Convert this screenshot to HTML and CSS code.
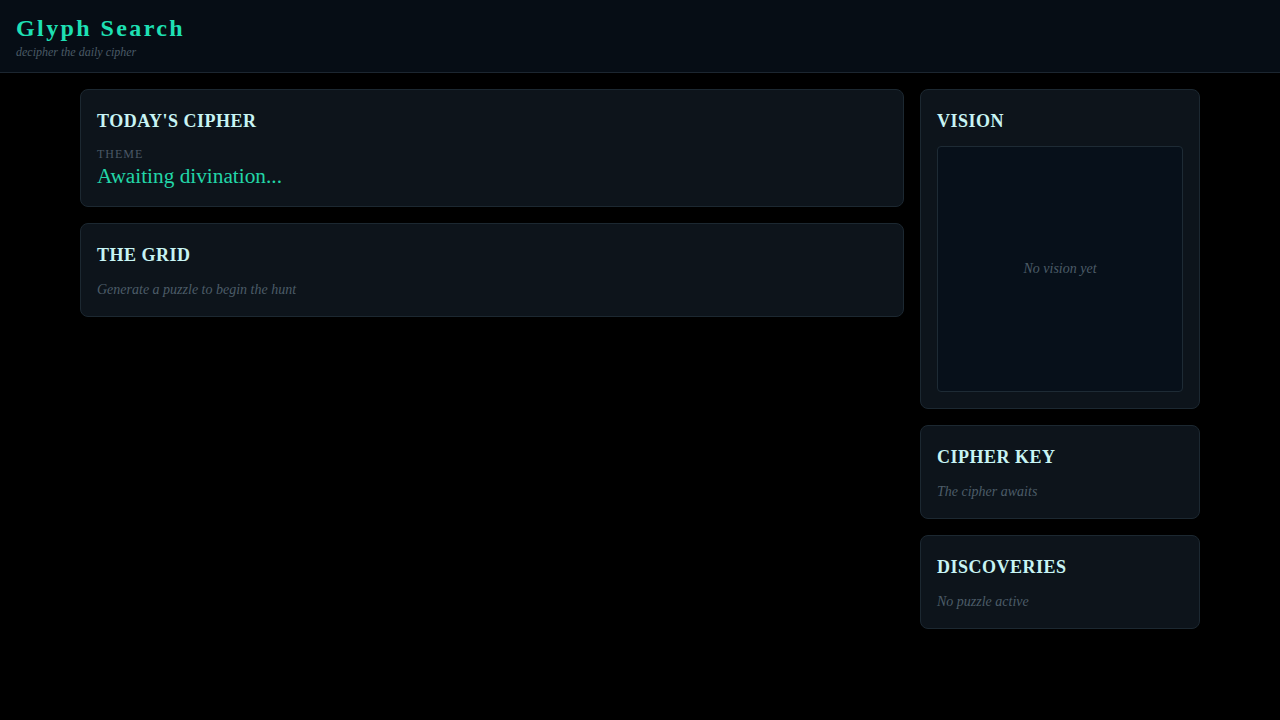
FILE: index.html
```html
<!DOCTYPE html>
<html lang="en">
<head>
<meta charset="utf-8">
<title>Glyph Search</title>
<link rel="stylesheet" href="styles.css">
</head>
<body>
<header class="topbar">
  <h1 class="brand">Glyph Search</h1>
  <p class="tagline">decipher the daily cipher</p>
</header>
<main class="layout">
  <section class="col-main">
    <div class="card">
      <h2 class="card-title">TODAY'S CIPHER</h2>
      <div class="label">THEME</div>
      <div class="theme">Awaiting divination...</div>
    </div>
    <div class="card">
      <h2 class="card-title">THE GRID</h2>
      <p class="empty">Generate a puzzle to begin the hunt</p>
    </div>
  </section>
  <aside class="col-side">
    <div class="card">
      <h2 class="card-title">VISION</h2>
      <div class="vision"><span class="empty">No vision yet</span></div>
    </div>
    <div class="card">
      <h2 class="card-title">CIPHER KEY</h2>
      <p class="empty">The cipher awaits</p>
    </div>
    <div class="card">
      <h2 class="card-title">DISCOVERIES</h2>
      <p class="empty">No puzzle active</p>
    </div>
  </aside>
</main>
</body>
</html>
```
FILE: styles.css
```css
* { box-sizing: border-box; }
html, body { margin: 0; padding: 0; }
body {
  background: #000000;
  font-family: "Liberation Serif", serif;
  color: #c8f0f0;
  min-height: 720px;
}
.topbar {
  background: #060d15;
  border-bottom: 1px solid #1c2630;
  height: 73px;
  padding: 14px 16px 0;
}
.brand {
  margin: 0;
  font-size: 24px;
  font-weight: bold;
  letter-spacing: 2.4px;
  color: #1ee0b4;
  line-height: 28px;
}
.tagline {
  margin: 2px 0 0;
  font-size: 12px;
  font-style: italic;
  color: #4a5a66;
  line-height: 16px;
}
.layout {
  width: 1120px;
  margin: 0 auto;
  padding-top: 16px;
  display: flex;
  gap: 16px;
  align-items: flex-start;
}
.col-main {
  flex: 1;
  display: flex;
  flex-direction: column;
  gap: 16px;
}
.col-side {
  width: 280px;
  display: flex;
  flex-direction: column;
  gap: 16px;
}
.card {
  background: #0d141b;
  border: 1px solid #1c2831;
  border-radius: 8px;
  padding: 16px;
}
.card-title {
  margin: 0 0 10px;
  font-size: 18px;
  font-weight: bold;
  letter-spacing: 0.5px;
  color: #c8f4f4;
  line-height: 30px;
}
.label {
  font-size: 12px;
  letter-spacing: 1px;
  color: #4a5866;
  line-height: 16px;
}
.theme {
  font-size: 21.3px;
  color: #22d6a8;
  line-height: 28px;
}
.empty {
  margin: 0;
  font-size: 14px;
  font-style: italic;
  color: #4c5c68;
  line-height: 20px;
}
.vision {
  height: 246px;
  background: #07101a;
  border: 1px solid #1e2b35;
  border-radius: 4px;
  display: flex;
  align-items: center;
  justify-content: center;
}
```
